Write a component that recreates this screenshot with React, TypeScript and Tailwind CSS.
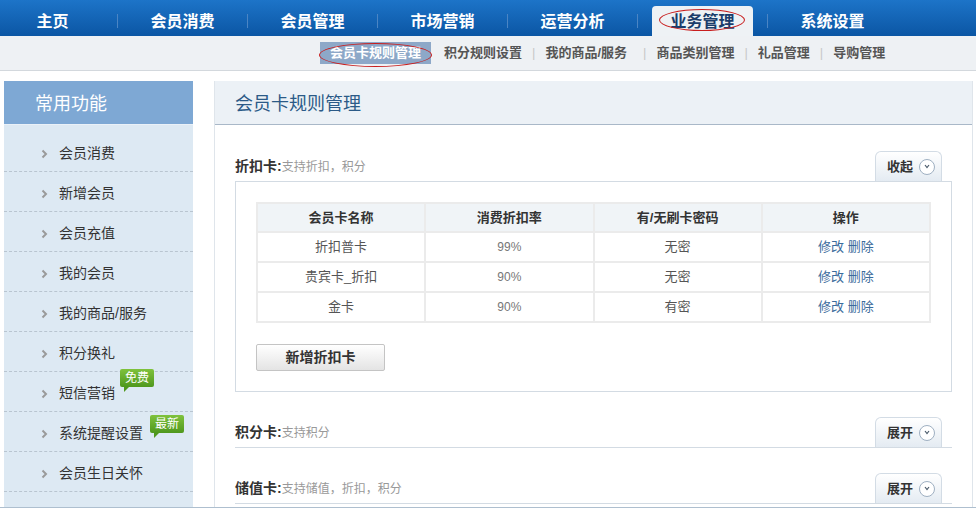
import React from 'react';

const topNav = ['主页', '会员消费', '会员管理', '市场营销', '运营分析', '业务管理', '系统设置'];
const subNav = ['积分规则设置', '我的商品/服务', '商品类别管理', '礼品管理', '导购管理'];
const sideItems = ['会员消费', '新增会员', '会员充值', '我的会员', '我的商品/服务', '积分换礼', '短信营销', '系统提醒设置', '会员生日关怀'];
const rows = [
  { name: '折扣普卡', rate: '99%', pwd: '无密' },
  { name: '贵宾卡_折扣', rate: '90%', pwd: '无密' },
  { name: '金卡', rate: '90%', pwd: '有密' },
];

function Chevron() {
  return (
    <svg width="7" height="10" viewBox="0 0 7 10" className="shrink-0">
      <path d="M1.5 1.5 L5 5 L1.5 8.5" fill="none" stroke="#9a9a9a" strokeWidth="2" />
    </svg>
  );
}

function Badge({ text, className }: { text: string; className: string }) {
  return (
    <span className={`absolute ${className}`}>
      <span className="block whitespace-nowrap h-[18px] px-[5px] rounded-[2px] bg-gradient-to-b from-[#7fc23c] to-[#4f981d] text-white text-[12px] leading-[18px]">
        {text}
      </span>
      <span className="absolute left-[4px] top-[17px] w-0 h-0 border-t-[6px] border-t-[#4f981d] border-r-[6px] border-r-transparent" />
    </span>
  );
}

function ToggleBtn({ label }: { label: string }) {
  return (
    <div className="w-[67px] h-[30px] mr-[10px] rounded-t-[6px] border border-b-0 border-[#d3dce5] bg-gradient-to-b from-white to-[#e4ebf2] flex items-center pl-[11px] gap-[6px]">
      <span className="text-[13px] font-bold text-[#333]">{label}</span>
      <span className="w-[16px] h-[16px] rounded-full border border-[#9fb0c2] bg-white flex items-center justify-center">
        <svg width="6" height="5" viewBox="0 0 6 5">
          <path d="M1 1 L3 3.5 L5 1" fill="none" stroke="#4a5a6a" strokeWidth="1.2" />
        </svg>
      </span>
    </div>
  );
}

function SectionTitle({ name, desc }: { name: string; desc: string }) {
  return (
    <div className="pb-[7px] leading-[14px]">
      <span className="text-[14px] font-bold text-[#333]">{name}:</span>
      <span className="text-[12px] text-[#999]">{desc}</span>
    </div>
  );
}

export default function App() {
  return (
    <div
      className="w-[976px] h-[508px] overflow-hidden bg-white"
      style={{ fontFamily: '"Liberation Sans", "Noto Sans CJK SC", sans-serif' }}
    >
      {/* top nav */}
      <div className="h-[36px] bg-gradient-to-b from-[#1d74c8] to-[#0b56a4] flex items-end -ml-[12px]">
        {topNav.map((t, i) => (
          <React.Fragment key={t}>
            {i > 0 && <span className="w-[1px] h-[14px] mb-[8px] bg-[#4b85c4]" />}
            <div className="w-[129px] h-[36px] flex items-end justify-center">
              {i === 5 ? (
                <div className="relative w-[101px] h-[30px] pt-[2px] rounded-t-[4px] bg-[#eef2f5] flex items-center justify-center text-[16px] font-bold text-[#1b3d6b]">
                  业务管理
                  <span className="absolute left-[7px] top-[3px] w-[86px] h-[22px] rounded-[50%] border border-[#c81e1e]" />
                </div>
              ) : (
                <div className="h-[30px] pt-[2px] flex items-center text-[16px] font-bold text-white">{t}</div>
              )}
            </div>
          </React.Fragment>
        ))}
      </div>

      {/* sub nav */}
      <div className="h-[35px] bg-[#eef1f4] border-b border-[#d3d8dd] flex items-center pl-[320px] text-[13px] font-bold text-[#555]">
        <div className="relative h-[22px] px-[10px] bg-[#8da8c8] text-white flex items-center">
          会员卡规则管理
          <span className="absolute -left-[1px] top-[1px] w-[113px] h-[24px] rounded-[50%] border border-[#c81e1e]" />
        </div>
        {subNav.map((t, i) => (
          <React.Fragment key={t}>
            {i > 0 && <span className={`text-[#c8c8c8] font-normal ${i === 2 ? 'ml-[16px]' : 'ml-[10px]'}`}>|</span>}
            <span className={i === 0 ? 'ml-[13px]' : 'ml-[10px]'}>{t}</span>
          </React.Fragment>
        ))}
      </div>

      {/* body */}
      <div className="h-[428px] mt-[10px] flex border-b-[2px] border-[#aebfcf]">
        {/* sidebar */}
        <div className="ml-[4px] w-[189px] bg-[#dde9f3] flex flex-col">
          <div className="h-[44px] pt-[4px] bg-[#7ea8d4] border-b border-[#eaf1f8] flex items-center pl-[31px] text-[18px] text-white">
            常用功能
          </div>
          <div className="pt-[7px]">
            {sideItems.map((t, i) => (
              <div key={t} className="h-[40px] pt-[4px] border-b border-dashed border-[#b9c5d0] flex items-center pl-[37px] gap-[11px] text-[14px] text-[#333]">
                <Chevron />
                <span className="relative">
                  {t}
                  {i === 6 && <Badge text="免费" className="left-[61px] -top-[14px]" />}
                  {i === 7 && <Badge text="最新" className="left-[91px] -top-[8px]" />}
                </span>
              </div>
            ))}
          </div>
        </div>

        {/* main */}
        <div className="ml-[21px] w-[759px] border-x border-[#dfe5eb] flex flex-col">
          <div className="h-[44px] pt-[4px] bg-[#ecf1f6] border-b border-[#a9b8c8] flex items-center pl-[20px] text-[18px] text-[#2b5a87]">
            会员卡规则管理
          </div>
          <div className="px-[20px]">
            {/* 折扣卡 */}
            <div className="pt-[26px] flex items-end justify-between">
              <SectionTitle name="折扣卡" desc="支持折扣，积分" />
              <ToggleBtn label="收起" />
            </div>
            <div className="border border-[#d3dbe3] px-[20px] pt-[20px] pb-[20px]">
              <table className="w-full border-collapse border border-[#e3e3e3] text-[13px] text-center">
                <thead>
                  <tr className="h-[29px] bg-[#f0f4f7] font-bold text-[#333]">
                    <th className="border-2 border-[#ebebeb] w-1/4">会员卡名称</th>
                    <th className="border-2 border-[#ebebeb] w-1/4">消费折扣率</th>
                    <th className="border-2 border-[#ebebeb] w-1/4">有/无刷卡密码</th>
                    <th className="border-2 border-[#ebebeb] w-1/4">操作</th>
                  </tr>
                </thead>
                <tbody>
                  {rows.map((r) => (
                    <tr key={r.name} className="h-[30px] text-[#555]">
                      <td className="border-2 border-[#ebebeb]">{r.name}</td>
                      <td className="border-2 border-[#ebebeb] text-[12px] text-[#777]">{r.rate}</td>
                      <td className="border-2 border-[#ebebeb]">{r.pwd}</td>
                      <td className="border-2 border-[#ebebeb] text-[#3b6b9c]">
                        <a>修改</a> <a>删除</a>
                      </td>
                    </tr>
                  ))}
                </tbody>
              </table>
              <button className="mt-[21px] w-[129px] h-[27px] rounded-[2px] border border-[#c4c4c4] bg-gradient-to-b from-white to-[#e4e4e4] text-[14px] font-bold text-[#333]">
                新增折扣卡
              </button>
            </div>

            {/* 积分卡 */}
            <div className="h-[56px] flex items-end justify-between border-b border-[#d3dbe3]">
              <SectionTitle name="积分卡" desc="支持积分" />
              <ToggleBtn label="展开" />
            </div>

            {/* 储值卡 */}
            <div className="h-[56px] flex items-end justify-between border-b border-[#d3dbe3]">
              <SectionTitle name="储值卡" desc="支持储值，折扣，积分" />
              <ToggleBtn label="展开" />
            </div>
          </div>
        </div>
      </div>
    </div>
  );
}
